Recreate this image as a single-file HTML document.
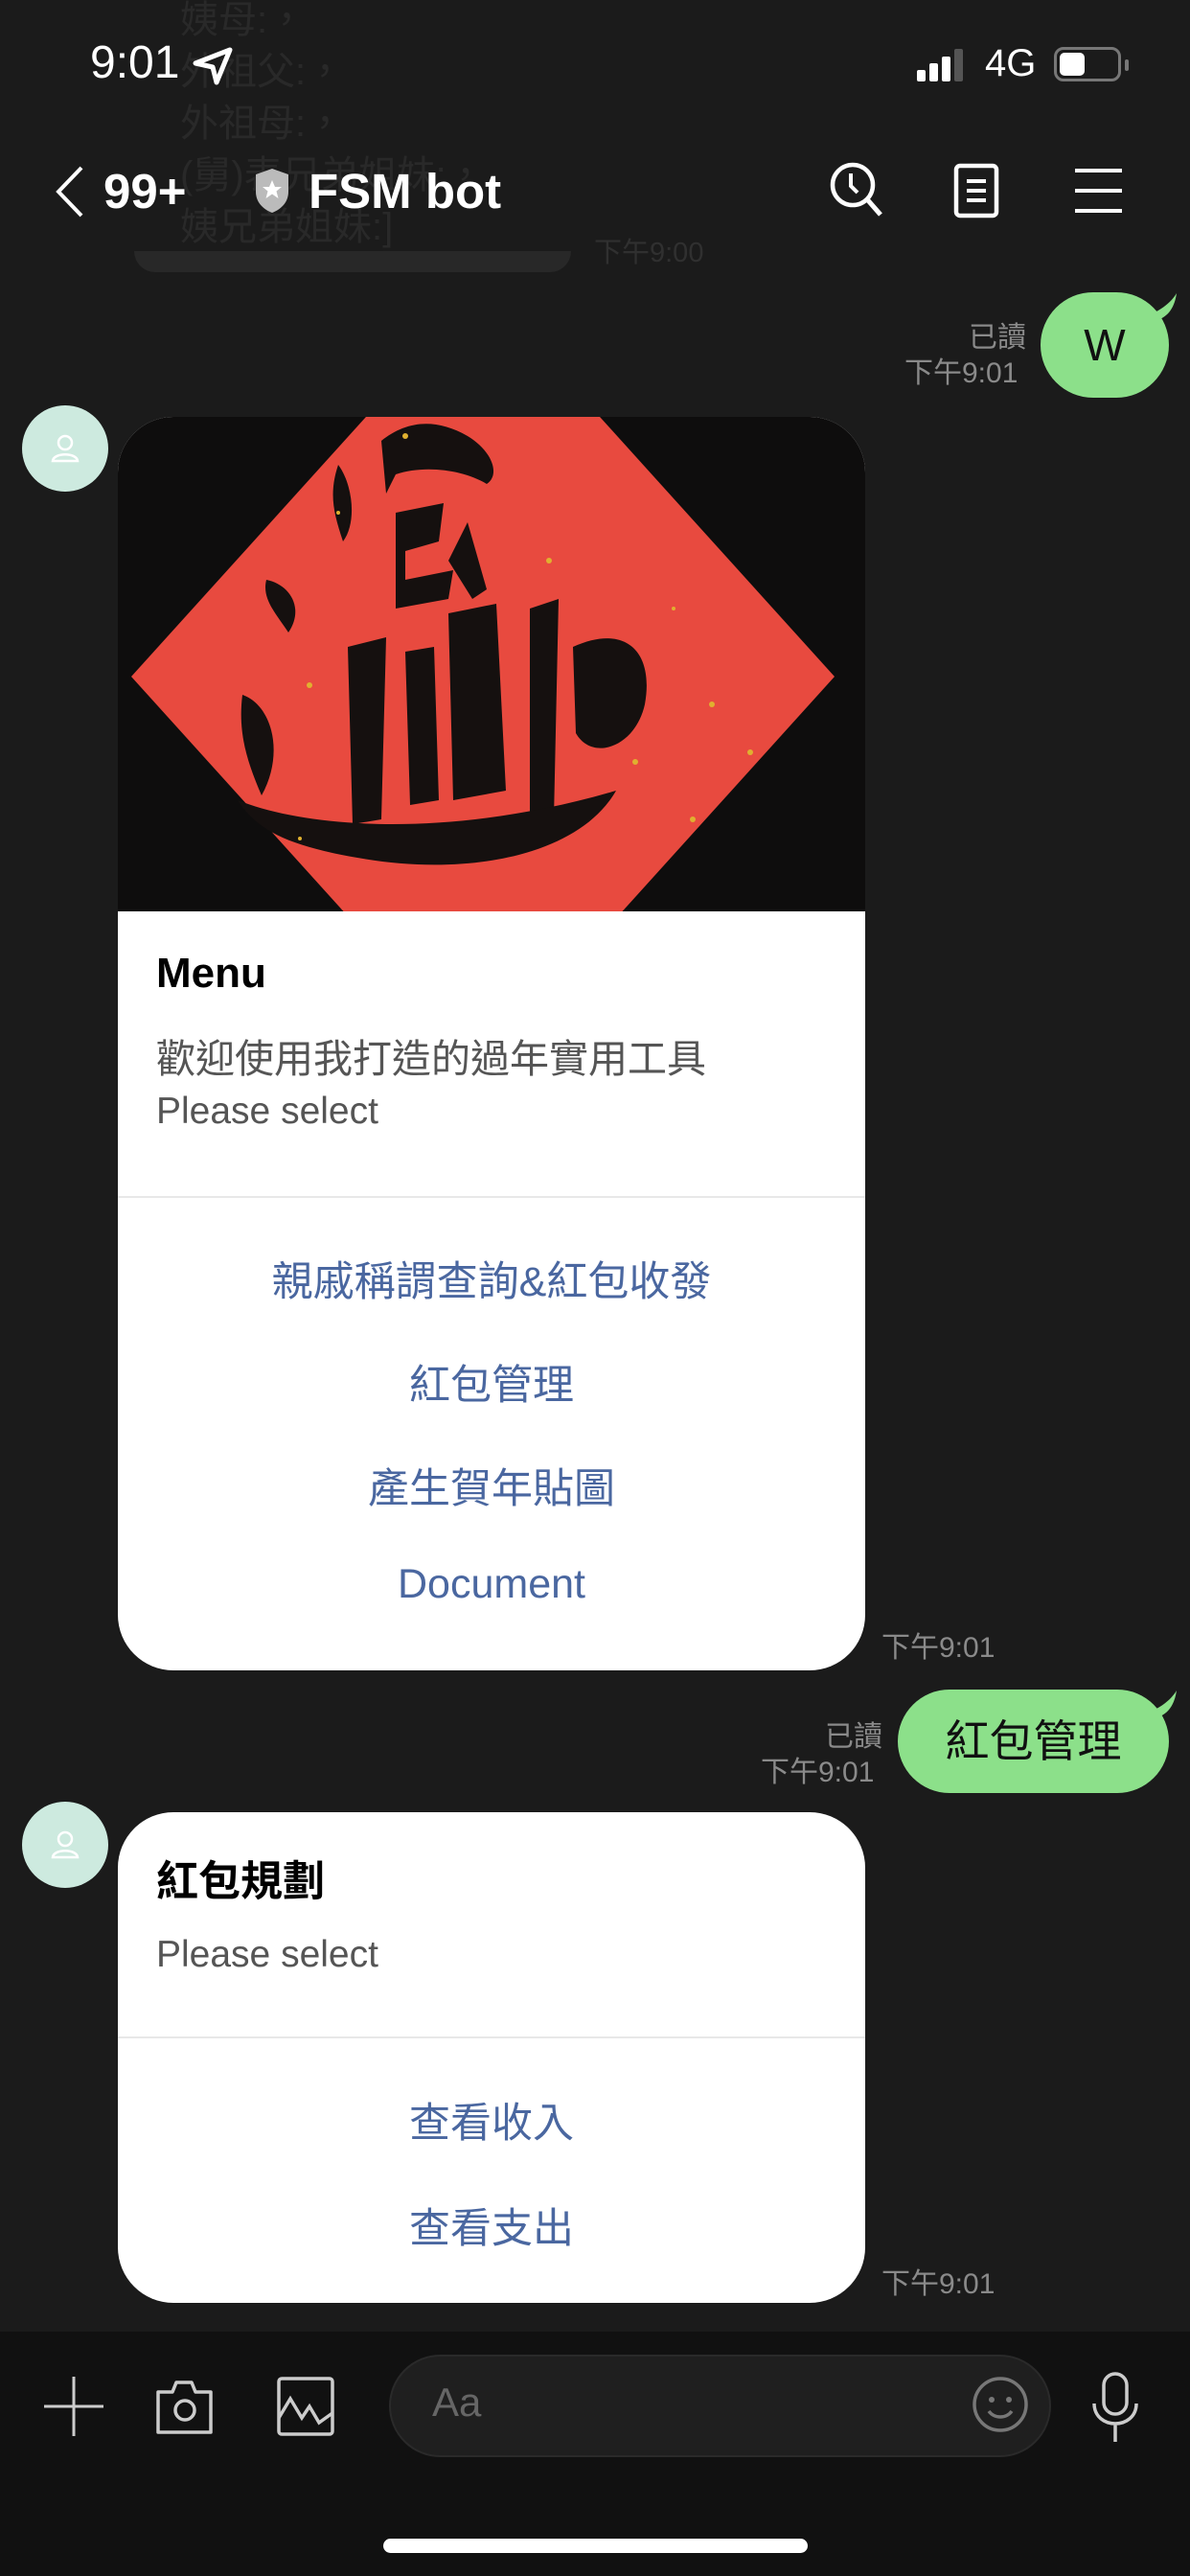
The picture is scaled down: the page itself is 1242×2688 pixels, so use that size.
<!DOCTYPE html>
<html><head><meta charset="utf-8"><style>
*{margin:0;padding:0;box-sizing:border-box}
body{width:1242px;height:2688px;background:#1b1b1b;position:relative;overflow:hidden;font-family:"Liberation Sans","Noto Sans CJK TC",sans-serif}
.a{position:absolute;white-space:nowrap}
.faint{color:#292929;font-size:40px;left:188px}
.card{position:absolute;left:123px;width:780px;background:#fff;border-radius:58px;overflow:hidden}
.title{position:absolute;left:40px;font-weight:bold;font-size:44px;color:#000}
.body{position:absolute;left:40px;font-size:39px;color:#555}
.div{position:absolute;left:0;right:0;height:2px;background:#e8e8e8}
.lnk{position:absolute;left:0;right:0;text-align:center;font-size:43px;color:#4a67a0}
.time{position:absolute;font-size:30px;color:#8a8a8a}
.av{position:absolute;left:23px;width:90px;height:90px;border-radius:50%;background:#cdeadf}
.bub{position:absolute;background:#8ce08a;border-radius:56px;color:#111;text-align:center}
</style></head><body>
<div class="a faint" style="top:-12px">姨母:，</div>
<div class="a faint" style="top:42px">外祖父:，</div>
<div class="a faint" style="top:96px">外祖母:，</div>
<div class="a faint" style="top:150px">(舅)表兄弟姐妹:，</div>
<div class="a faint" style="top:204px">姨兄弟姐妹:]</div>
<div class="a" style="left:140px;top:262px;width:456px;height:22px;background:#282828;border-radius:0 0 40px 40px"></div>
<div class="a" style="left:620px;top:240px;font-size:29px;color:#303030">下午9:00</div>

<div class="a" style="left:94px;top:38px;font-size:48px;color:#fff">9:01</div>
<svg class="a" style="left:200px;top:48px" width="46" height="42" viewBox="0 0 46 42"><path d="M40 4 L4 18 L22 22 L26 38 Z" fill="none" stroke="#fff" stroke-width="5" stroke-linejoin="round"/></svg>
<div class="a" style="left:957px;top:73px;width:9px;height:12px;background:#fff;border-radius:2px"></div>
<div class="a" style="left:970px;top:66px;width:9px;height:19px;background:#fff;border-radius:2px"></div>
<div class="a" style="left:983px;top:59px;width:9px;height:26px;background:#fff;border-radius:2px"></div>
<div class="a" style="left:996px;top:51px;width:9px;height:34px;background:#555;border-radius:2px"></div>
<div class="a" style="left:1028px;top:44px;font-size:40px;color:#fff">4G</div>
<div class="a" style="left:1100px;top:49px;width:70px;height:36px;border:3px solid #777;border-radius:10px"></div>
<div class="a" style="left:1106px;top:55px;width:26px;height:24px;background:#fff;border-radius:5px"></div>
<div class="a" style="left:1174px;top:62px;width:4px;height:12px;background:#777;border-radius:2px"></div>

<svg class="a" style="left:55px;top:172px" width="36" height="56" viewBox="0 0 36 56"><path d="M30 3 L6 28 L30 53" fill="none" stroke="#fff" stroke-width="4"/></svg>
<div class="a" style="left:108px;top:170px;font-size:51px;font-weight:bold;color:#fff">99+</div>
<svg class="a" style="left:264px;top:174px" width="40" height="50" viewBox="0 0 40 50"><path d="M20 2 L37 8 V26 C37 38 28 45 20 48 C12 45 3 38 3 26 V8 Z" fill="#bbb"/><path d="M20 14 L23 21 L30 21 L24.5 25.5 L26.5 33 L20 28.5 L13.5 33 L15.5 25.5 L10 21 L17 21 Z" fill="#fff"/></svg>
<div class="a" style="left:322px;top:170px;font-size:51px;font-weight:bold;color:#fff">FSM bot</div>
<svg class="a" style="left:864px;top:166px" width="64" height="62" viewBox="0 0 64 62"><circle cx="26" cy="27" r="21" fill="none" stroke="#fff" stroke-width="4.5"/><path d="M24 15 V28 L31 35" fill="none" stroke="#fff" stroke-width="4"/><path d="M41 42 L55 58" stroke="#fff" stroke-width="5"/></svg>
<svg class="a" style="left:994px;top:170px" width="54" height="60" viewBox="0 0 54 60"><rect x="4" y="3" width="42" height="52" rx="4" fill="none" stroke="#fff" stroke-width="4.5"/><path d="M15 19 H35 M15 29 H35 M15 39 H35" stroke="#fff" stroke-width="4"/></svg>
<div class="a" style="left:1122px;top:176px;width:49px;height:4px;background:#fff"></div>
<div class="a" style="left:1122px;top:197px;width:49px;height:4px;background:#fff"></div>
<div class="a" style="left:1122px;top:218px;width:49px;height:4px;background:#fff"></div>

<div class="time" style="left:1011px;top:327px">已讀</div>
<div class="time" style="left:944px;top:364px">下午9:01</div>
<div class="bub" style="left:1086px;top:305px;width:134px;height:110px;font-size:46px;line-height:110px">W</div>
<svg class="a" style="left:1190px;top:304px" width="40" height="30"><path d="M0 28 C20 22 32 12 38 2 C36 16 30 26 18 30 Z" fill="#8ce08a"/></svg>

<div class="av" style="top:423px"></div>
<svg class="a" style="left:48px;top:448px" width="40" height="40" viewBox="0 0 40 40"><circle cx="20" cy="14" r="7" fill="none" stroke="#fff" stroke-width="2.5"/><path d="M7 33 C8 24 32 24 33 33 Z" fill="none" stroke="#fff" stroke-width="2.5"/></svg>
<div class="card" style="top:435px;height:1308px">
 <div style="position:absolute;left:0;top:0;width:780px;height:516px;background:#0e0d0d;overflow:hidden">
  <svg width="780" height="516" viewBox="0 0 780 516"><polygon points="381,-135 748,271 381,677 14,271" fill="#e84a3f"/>
  <g fill="#15100f">
   <path d="M275 25 C300 5 330 0 365 20 C390 35 400 60 385 70 C360 55 320 50 290 60 L280 80 Z"/>
   <path d="M290 100 L340 90 L335 130 L300 140 L300 170 L350 160 L345 190 L290 200 Z"/>
   <path d="M345 150 L365 110 L385 180 L370 190 Z"/>
   <path d="M230 50 C245 70 250 110 235 130 C225 100 220 80 230 50 Z"/>
   <path d="M155 170 C180 175 195 200 178 225 C165 205 150 190 155 170 Z"/>
   <path d="M240 240 L280 230 L275 420 L245 425 Z M300 245 L330 240 L335 400 L305 405 Z"/>
   <path d="M345 205 L395 195 L405 390 L350 400 Z M360 260 L390 255 M355 310 L395 305" />
   <path d="M430 200 L460 190 L455 420 L430 425 Z M475 240 C530 215 560 245 550 300 C540 345 495 360 478 330 Z"/>
   <path d="M125 400 C200 430 350 440 520 390 C480 460 360 480 250 460 C180 448 145 432 125 400 Z"/>
   <path d="M130 290 C160 300 175 350 150 395 C135 360 125 330 130 290 Z"/>
  </g>
  <g fill="#e0b030"><circle cx="300" cy="20" r="3"/><circle cx="450" cy="150" r="3"/><circle cx="620" cy="300" r="3"/><circle cx="200" cy="280" r="3"/><circle cx="580" cy="200" r="2"/><circle cx="540" cy="360" r="3"/><circle cx="230" cy="100" r="2"/><circle cx="660" cy="350" r="3"/><circle cx="190" cy="440" r="2"/><circle cx="600" cy="420" r="3"/></g>
  </svg>
 </div>
 <div class="title" style="top:556px">Menu</div>
 <div class="body" style="top:636px;font-size:41px">歡迎使用我打造的過年實用工具</div>
 <div class="body" style="top:703px">Please select</div>
 <div class="div" style="top:813px"></div>
 <div class="lnk" style="top:868px">親戚稱謂查詢&amp;紅包收發</div>
 <div class="lnk" style="top:976px">紅包管理</div>
 <div class="lnk" style="top:1084px">產生賀年貼圖</div>
 <div class="lnk" style="top:1194px">Document</div>
</div>
<div class="time" style="left:920px;top:1694px">下午9:01</div>

<div class="time" style="left:861px;top:1787px">已讀</div>
<div class="time" style="left:794px;top:1824px">下午9:01</div>
<div class="bub" style="left:937px;top:1763px;width:283px;height:108px;font-size:46px;line-height:108px">紅包管理</div>
<svg class="a" style="left:1190px;top:1762px" width="40" height="30"><path d="M0 28 C20 22 32 12 38 2 C36 16 30 26 18 30 Z" fill="#8ce08a"/></svg>

<div class="av" style="top:1880px"></div>
<svg class="a" style="left:48px;top:1905px" width="40" height="40" viewBox="0 0 40 40"><circle cx="20" cy="14" r="7" fill="none" stroke="#fff" stroke-width="2.5"/><path d="M7 33 C8 24 32 24 33 33 Z" fill="none" stroke="#fff" stroke-width="2.5"/></svg>
<div class="card" style="top:1891px;height:512px">
 <div class="title" style="top:36px">紅包規劃</div>
 <div class="body" style="top:127px">Please select</div>
 <div class="div" style="top:234px"></div>
 <div class="lnk" style="top:290px">查看收入</div>
 <div class="lnk" style="top:400px">查看支出</div>
</div>
<div class="time" style="left:920px;top:2358px">下午9:01</div>

<div class="a" style="left:0;top:2433px;width:1242px;height:255px;background:#111"></div>
<svg class="a" style="left:44px;top:2478px" width="66" height="66"><path d="M33 2 V64 M2 33 H64" stroke="#ccc" stroke-width="3"/></svg>
<svg class="a" style="left:160px;top:2478px" width="66" height="66" viewBox="0 0 66 66"><path d="M5 18 H20 L24 8 H40 L44 18 H60 V60 H5 Z" fill="none" stroke="#ccc" stroke-width="3.5" stroke-linejoin="round"/><circle cx="33" cy="37" r="10" fill="none" stroke="#ccc" stroke-width="3.5"/></svg>
<svg class="a" style="left:287px;top:2478px" width="66" height="66" viewBox="0 0 66 66"><rect x="4" y="4" width="56" height="58" rx="3" fill="none" stroke="#ccc" stroke-width="3.5"/><path d="M4 45 L16 25 L28 45 L36 33 L46 50 L60 40" fill="none" stroke="#ccc" stroke-width="3.5"/></svg>
<div class="a" style="left:406px;top:2457px;width:691px;height:107px;background:#1f1f1f;border:2px solid #2a2a2a;border-radius:54px"></div>
<div class="a" style="left:451px;top:2483px;font-size:42px;color:#666">Aa</div>
<svg class="a" style="left:1013px;top:2478px" width="62" height="62" viewBox="0 0 62 62"><circle cx="31" cy="31" r="27" fill="none" stroke="#777" stroke-width="3.5"/><circle cx="22" cy="26" r="3" fill="#777"/><circle cx="40" cy="26" r="3" fill="#777"/><path d="M19 38 C25 46 37 46 43 38" fill="none" stroke="#777" stroke-width="3.5"/></svg>
<svg class="a" style="left:1136px;top:2474px" width="56" height="76" viewBox="0 0 56 76"><rect x="16" y="3" width="24" height="42" rx="12" fill="none" stroke="#ccc" stroke-width="3.5"/><path d="M6 34 C6 62 50 62 50 34 M28 55 V74" fill="none" stroke="#ccc" stroke-width="3.5"/></svg>
<div class="a" style="left:400px;top:2649px;width:443px;height:15px;background:#fff;border-radius:8px"></div>
</body></html>
